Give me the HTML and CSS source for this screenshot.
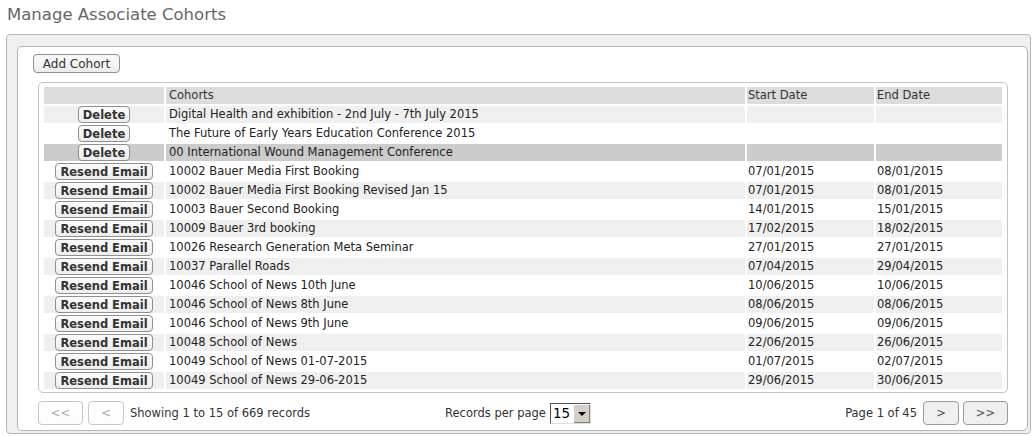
FILE: index.html
```html
<!DOCTYPE html>
<html>
<head>
<meta charset="utf-8">
<link rel="stylesheet" href="styles.css">
</head>
<body>
<h1 class="title">Manage Associate Cohorts</h1>
<div class="outer">
  <div class="inner">
    <button class="add-btn">Add Cohort</button>
    <div class="grid-box">
      <table class="grid">
        <colgroup>
          <col class="c-act"><col class="c-name"><col class="c-start"><col class="c-end">
        </colgroup>
        <thead>
          <tr><th></th><th>Cohorts</th><th class="date">Start Date</th><th class="date">End Date</th></tr>
        </thead>
        <tbody>
          <tr class="odd"><td class="act"><button class="row-btn">Delete</button></td><td>Digital Health and exhibition - 2nd July - 7th July 2015</td><td class="date"></td><td class="date"></td></tr>
          <tr><td class="act"><button class="row-btn">Delete</button></td><td>The Future of Early Years Education Conference 2015</td><td class="date"></td><td class="date"></td></tr>
          <tr class="sel"><td class="act"><button class="row-btn">Delete</button></td><td>00 International Wound Management Conference</td><td class="date"></td><td class="date"></td></tr>
          <tr><td class="act"><button class="row-btn">Resend Email</button></td><td>10002 Bauer Media First Booking</td><td class="date">07/01/2015</td><td class="date">08/01/2015</td></tr>
          <tr class="odd"><td class="act"><button class="row-btn">Resend Email</button></td><td>10002 Bauer Media First Booking Revised Jan 15</td><td class="date">07/01/2015</td><td class="date">08/01/2015</td></tr>
          <tr><td class="act"><button class="row-btn">Resend Email</button></td><td>10003 Bauer Second Booking</td><td class="date">14/01/2015</td><td class="date">15/01/2015</td></tr>
          <tr class="odd"><td class="act"><button class="row-btn">Resend Email</button></td><td>10009 Bauer 3rd booking</td><td class="date">17/02/2015</td><td class="date">18/02/2015</td></tr>
          <tr><td class="act"><button class="row-btn">Resend Email</button></td><td>10026 Research Generation Meta Seminar</td><td class="date">27/01/2015</td><td class="date">27/01/2015</td></tr>
          <tr class="odd"><td class="act"><button class="row-btn">Resend Email</button></td><td>10037 Parallel Roads</td><td class="date">07/04/2015</td><td class="date">29/04/2015</td></tr>
          <tr><td class="act"><button class="row-btn">Resend Email</button></td><td>10046 School of News 10th June</td><td class="date">10/06/2015</td><td class="date">10/06/2015</td></tr>
          <tr class="odd"><td class="act"><button class="row-btn">Resend Email</button></td><td>10046 School of News 8th June</td><td class="date">08/06/2015</td><td class="date">08/06/2015</td></tr>
          <tr><td class="act"><button class="row-btn">Resend Email</button></td><td>10046 School of News 9th June</td><td class="date">09/06/2015</td><td class="date">09/06/2015</td></tr>
          <tr class="odd"><td class="act"><button class="row-btn">Resend Email</button></td><td>10048 School of News</td><td class="date">22/06/2015</td><td class="date">26/06/2015</td></tr>
          <tr><td class="act"><button class="row-btn">Resend Email</button></td><td>10049 School of News 01-07-2015</td><td class="date">01/07/2015</td><td class="date">02/07/2015</td></tr>
          <tr class="odd"><td class="act"><button class="row-btn">Resend Email</button></td><td>10049 School of News 29-06-2015</td><td class="date">29/06/2015</td><td class="date">30/06/2015</td></tr>
        </tbody>
      </table>
    </div>
    <div class="pager">
      <div class="pager-left">
        <button class="pg-btn wide disabled">&lt;&lt;</button>
        <button class="pg-btn disabled">&lt;</button>
        <span class="pg-text">Showing 1 to 15 of 669 records</span>
      </div>
      <div class="pager-mid">
        <span class="pg-text">Records per page</span>
        <span class="select"><span class="sel-val">15</span><span class="sel-arrow"></span></span>
      </div>
      <div class="pager-right">
        <span class="pg-text">Page 1 of 45</span>
        <button class="pg-btn">&gt;</button>
        <button class="pg-btn wide">&gt;&gt;</button>
      </div>
    </div>
  </div>
</div>
</body>
</html>
```
FILE: styles.css
```css
html, body {
  margin: 0;
  padding: 0;
  background: #ffffff;
}
body {
  font-family: "DejaVu Sans", Verdana, sans-serif;
  font-size: 11.5px;
  color: #222;
  width: 1032px;
  height: 436px;
  overflow: hidden;
}
.title {
  margin: 0;
  padding: 4px 0 0 7px;
  height: 34px;
  box-sizing: border-box;
  font-size: 16.5px;
  font-weight: normal;
  color: #666;
  line-height: 22px;
}
.outer {
  margin-left: 6px;
  width: 1025px;
  height: 400px;
  box-sizing: border-box;
  border: 1px solid #b5b5b5;
  border-radius: 4px;
  background: #efefef;
  padding: 11px 2px 2px 10px;
}
.inner {
  height: 385px;
  box-sizing: border-box;
  border: 1px solid #b5b5b5;
  border-radius: 5px;
  background: #ffffff;
  padding: 7px 19px 0 15px;
}
.add-btn {
  display: block;
  width: 87px;
  height: 19px;
  margin: 0;
  padding: 0;
  font-family: "DejaVu Sans", Verdana, sans-serif;
  font-size: 12px;
  color: #333;
  border: 1px solid #8f8f8f;
  border-radius: 4px;
  background: linear-gradient(#fafafa, #ececec);
}
.grid-box {
  margin: 9px 0 0 5px;
  border: 1px solid #c4c4c4;
  border-radius: 5px;
  padding: 2px 2px 1px 3px;
}
.grid {
  border-collapse: separate;
  border-spacing: 2px;
  width: 962px;
  table-layout: fixed;
}
.c-act { width: 120px; }
.c-start { width: 127px; }
.c-end { width: 126px; }
.grid th, .grid td {
  height: 17px;
  padding: 0 0 0 3px;
  text-align: left;
  font-weight: normal;
  white-space: nowrap;
  overflow: hidden;
  line-height: 17px;
}
.grid th.date, .grid td.date { padding-left: 1px; }
.grid th {
  background: #dcdcdc;
  color: #333;
}
.grid tr.odd td { background: #efefef; }
.grid tr.sel td { background: #cccccc; }
.grid td.act {
  padding: 0;
  text-align: center;
}
.row-btn {
  height: 17px;
  margin: 0;
  padding: 0 4px;
  font-family: "DejaVu Sans", Verdana, sans-serif;
  font-size: 11.5px;
  font-weight: bold;
  color: #333;
  border: 1px solid #8f8f8f;
  border-radius: 4px;
  background: linear-gradient(#fbfbfb, #ededed);
  vertical-align: top;
  line-height: 14px;
}
.pager {
  display: flex;
  align-items: center;
  justify-content: space-between;
  margin: 8px 0 0 5px;
  height: 24px;
}
.pager-left, .pager-mid, .pager-right {
  display: flex;
  align-items: center;
  gap: 5px;
}
.pager-left { width: 400px; }
.pager-right { width: 400px; justify-content: flex-end; gap: 4px; }
.pg-text { color: #333; }
.pager-left .pg-text { margin-left: 1px; }
.pager-right .pg-text { margin-right: 2px; }
.pg-btn {
  width: 36px;
  height: 24px;
  margin: 0;
  padding: 0;
  font-family: "DejaVu Sans", Verdana, sans-serif;
  font-size: 11.5px;
  color: #555;
  border: 1px solid #999;
  border-radius: 4px;
  background: #efefef;
}
.pg-btn.wide { width: 45px; }
.pg-btn.disabled {
  color: #aaa;
  border-color: #c8c8c8;
  background: #fdfdfd;
}
.pager-mid { gap: 4px; margin-left: -10px; }
.select {
  display: flex;
  width: 41px;
  height: 21px;
  box-sizing: border-box;
  border: 1px solid #555;
  border-right-color: #ddd;
  border-bottom-color: #ddd;
  background: #fff;
}
.sel-val {
  flex: 1;
  font-size: 13.5px;
  line-height: 19px;
  color: #000;
  padding-left: 2px;
}
.sel-arrow {
  width: 16px;
  background: #d4d0c8;
  border-left: 1px solid #fff;
  border-top: 1px solid #fff;
  box-shadow: inset -1px -1px 0 #808080;
  position: relative;
}
.sel-arrow::after {
  content: "";
  position: absolute;
  left: 4px;
  top: 7px;
  border-left: 4px solid transparent;
  border-right: 4px solid transparent;
  border-top: 4px solid #000;
}
```
